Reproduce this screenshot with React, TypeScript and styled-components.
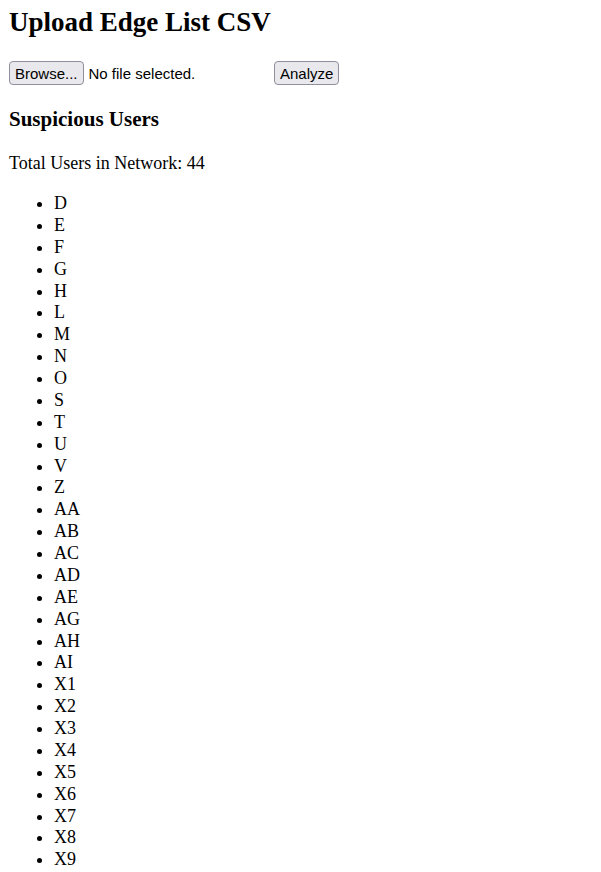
import React from "react";
import styled, { createGlobalStyle } from "styled-components";

const GlobalStyle = createGlobalStyle`
  html, body { margin: 0; padding: 0; background: #ffffff; }
  body { font-family: "Liberation Serif", "Times New Roman", serif; color: #000; }
`;

const Page = styled.div`
  padding: 7px 9px 0 9px;
  font-family: "Liberation Serif", "Times New Roman", serif;
  font-size: 18px;
`;

const Title = styled.h2`
  margin: 0;
  font-size: 27px;
  line-height: 31px;
  font-weight: bold;
`;

const UploadRow = styled.div`
  margin-top: 23px;
  display: flex;
  align-items: center;
  height: 24px;
`;

const FilePicker = styled.label`
  display: flex;
  align-items: center;
  gap: 5px;
  width: 265px;
  cursor: pointer;
`;

const HiddenInput = styled.input`
  display: none;
`;

const NativeButton = styled.span`
  box-sizing: border-box;
  display: inline-flex;
  align-items: center;
  justify-content: center;
  height: 24px;
  padding: 0 5px;
  border: 1px solid #8f8f9d;
  border-radius: 4px;
  background: #e9e9ed;
  font-family: "Liberation Sans", Arial, sans-serif;
  font-size: 15px;
  color: #000;
`;

const AnalyzeButton = styled.button`
  box-sizing: border-box;
  display: inline-flex;
  align-items: center;
  justify-content: center;
  height: 24px;
  padding: 0 5px;
  border: 1px solid #8f8f9d;
  border-radius: 4px;
  background: #e9e9ed;
  font-family: "Liberation Sans", Arial, sans-serif;
  font-size: 15px;
  color: #000;
  cursor: pointer;
`;

const FileName = styled.span`
  font-family: "Liberation Sans", Arial, sans-serif;
  font-size: 15px;
`;

const SectionTitle = styled.h3`
  margin: 22px 0 0 0;
  font-size: 21px;
  line-height: 24px;
  font-weight: bold;
`;

const Summary = styled.p`
  margin: 22px 0 0 0;
  font-size: 18px;
  line-height: 21px;
`;

const UserList = styled.ul`
  margin: 19px 0 0 0;
  padding-left: 45px;
  list-style: disc;
`;

const UserItem = styled.li`
  font-size: 18px;
  line-height: 21.87px;
`;

const users = [
  "D", "E", "F", "G", "H", "L", "M", "N", "O", "S", "T", "U", "V", "Z",
  "AA", "AB", "AC", "AD", "AE", "AG", "AH", "AI",
  "X1", "X2", "X3", "X4", "X5", "X6", "X7", "X8", "X9",
];

export default function App() {
  return (
    <>
      <GlobalStyle />
      <Page>
        <Title>Upload Edge List CSV</Title>
        <UploadRow>
          <FilePicker>
            <HiddenInput type="file" accept=".csv" />
            <NativeButton>Browse...</NativeButton>
            <FileName>No file selected.</FileName>
          </FilePicker>
          <AnalyzeButton type="button">Analyze</AnalyzeButton>
        </UploadRow>
        <SectionTitle>Suspicious Users</SectionTitle>
        <Summary>Total Users in Network: 44</Summary>
        <UserList>
          {users.map((u) => (
            <UserItem key={u}>{u}</UserItem>
          ))}
        </UserList>
      </Page>
    </>
  );
}
